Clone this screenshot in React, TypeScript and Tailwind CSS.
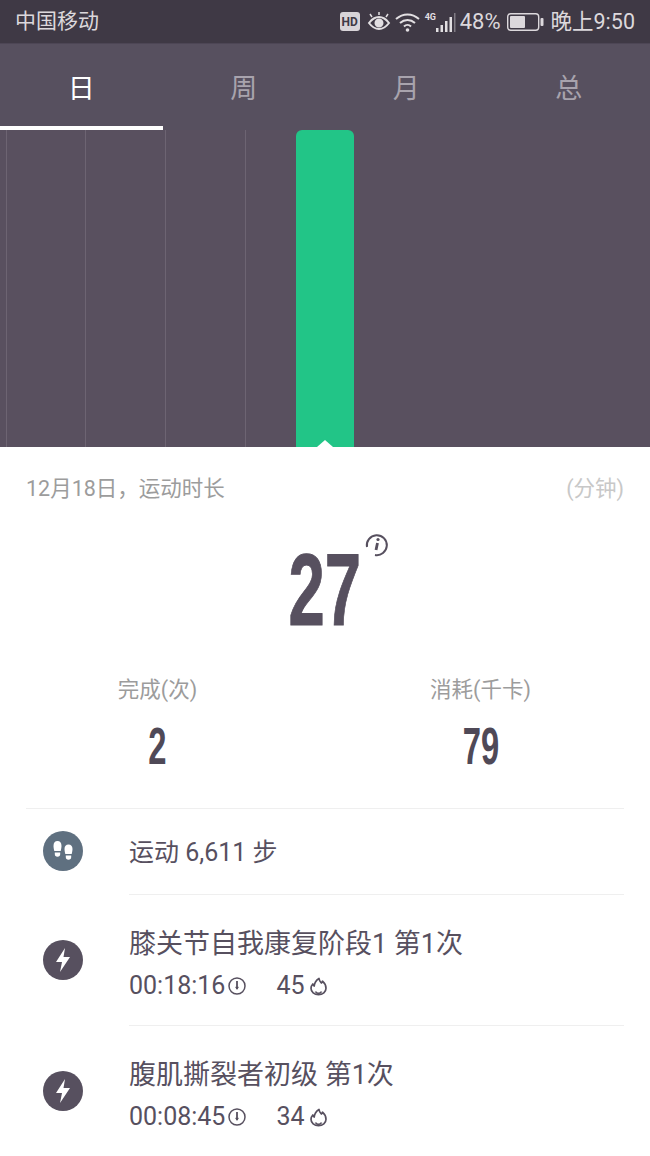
import React from 'react';

const FONT = { fontFamily: 'Roboto, "Noto Sans CJK SC", sans-serif' };
const NUM_FONT = { fontFamily: '"Liberation Sans", sans-serif' };

const TABS = ['日', '周', '月', '总'];
const GAPS = ['w-[6px]', 'w-[78px]', 'w-[79px]', 'w-[79px]'];

function StatusIcons() {
  return (
    <div className="flex items-center">
      <div className="w-[20px] h-[19px] rounded-[3px] bg-[#d8d4d8] text-[#3f3945] text-[12px] font-bold flex items-center justify-center leading-none">HD</div>
      <svg width="24" height="20" viewBox="0 0 24 20" className="ml-[7px]" fill="none" stroke="#e2dfe2" strokeWidth="2">
        <path d="M2 11c3-4 6-6 10-6s7 2 10 6c-3 4-6 6-10 6s-7-2-10-6z" />
        <circle cx="12" cy="11" r="3.500" fill="#e2dfe2" />
        <path d="M3 2l2 3M12 0v3M21 2l-2 3" strokeWidth="1.500" />
      </svg>
      <svg width="25" height="20" viewBox="0 0 25 20" className="ml-[4px]" fill="none" stroke="#e2dfe2" strokeWidth="2">
        <path d="M1 7c7-6 16-6 23 0M5 11c4.500-4 10.500-4 15 0M9 14.500c2-2 5-2 7 0" />
        <circle cx="12.500" cy="18" r="1.800" fill="#e2dfe2" stroke="none" />
      </svg>
      <div className="relative ml-[5px] w-[31px] h-[20px]">
        <svg width="31" height="20" viewBox="0 0 31 20" fill="#e2dfe2">
          <rect x="11" y="16" width="2.500" height="4" />
          <rect x="15.500" y="13" width="2.500" height="7" />
          <rect x="20" y="9" width="2.500" height="11" />
          <rect x="24.500" y="5" width="2.500" height="15" />
          <rect x="29" y="1" width="1.500" height="19" opacity="0.4" />
        </svg>
        <span className="absolute left-0 top-[1px] text-[9px] font-bold text-[#e2dfe2] leading-none">4G</span>
      </div>
      <span className="ml-[4px] text-[22px] leading-none text-[#dcd8dc]">48%</span>
      <svg width="37" height="18" viewBox="0 0 37 18" className="ml-[6px]" fill="none">
        <rect x="0.700" y="0.700" width="31" height="16.600" rx="3" stroke="#dcd8dc" strokeWidth="1.400" />
        <rect x="3" y="3" width="15" height="12" rx="1" fill="#dcd8dc" />
        <rect x="33.500" y="5" width="3" height="8" rx="1" fill="#dcd8dc" />
      </svg>
      <span className="ml-[7px] text-[21.500px] leading-none text-[#dcd8dc]">晚上9:50</span>
    </div>
  );
}

function Bolt() {
  return (
    <div className="w-[40px] h-[40px] rounded-full bg-[#57505f] flex items-center justify-center shrink-0">
      <svg width="18" height="26" viewBox="0 0 18 26" fill="#fff">
        <path d="M11 1L2 15h6l-2 10 10-15h-6.500z" />
      </svg>
    </div>
  );
}

function Steps() {
  return (
    <div className="w-[40px] h-[40px] rounded-full bg-[#5f7080] flex items-center justify-center shrink-0">
      <svg width="24" height="24" viewBox="0 0 24 24" fill="#fff">
        <path d="M2.500 7C2.500 3.800 4 2 6.500 2s4 1.800 4 5c0 1.800-.5 3.700-.8 5H3.300c-.3-1.300-.8-3.200-.8-5z" />
        <path d="M3.800 13.500h5.400V15a2.700 2.700 0 0 1-5.400 0z" />
        <path d="M13.500 10c0-3 1.500-4.500 4-4.500s4 1.500 4 4.500c0 1.800-.5 3.700-.8 5h-6.400c-.3-1.300-.8-3.200-.8-5z" />
        <path d="M14.800 16.500h5.400V18a2.700 2.700 0 0 1-5.400 0z" />
      </svg>
    </div>
  );
}

function Clock() {
  return (
    <svg width="18" height="18" viewBox="0 0 18 18" fill="none" stroke="#57505f" strokeWidth="1.500" className="ml-[3px]">
      <circle cx="9" cy="9" r="8" />
      <path d="M9 4v8" strokeWidth="1.800" />
      <path d="M7.500 10L9 12.500 10.500 10z" fill="#57505f" strokeWidth="0.500" />
    </svg>
  );
}

function Flame() {
  return (
    <svg width="19" height="19" viewBox="0 0 19 19" fill="none" stroke="#57505f" strokeWidth="1.700" strokeLinejoin="round" className="ml-[4px]">
      <path d="M10 1.500c.3 2.500 1.500 3.500 2.500 4.500.5-.5.8-1 1-1.800 2 1.800 3.500 4 3.500 7 0 3.800-3.300 6.500-7.500 6.500S2 15 2 11.200c0-1.700.7-3 1.800-4.200.3 1 .7 1.600 1.400 2C5.500 6 7.500 3 10 1.500z" />
      <path d="M6.500 14.500c.5 1.200 1.700 1.800 3 1.800s2.500-.6 3-1.800" />
    </svg>
  );
}

function Workout({ title, time, kcal, border }: { title: string; time: string; kcal: string; border?: boolean }) {
  return (
    <div className="flex items-start">
      <div className="w-[129px] shrink-0 pl-[43px] pt-[45px]"><Bolt /></div>
      <div className={`flex-1 h-[131px] pt-[31px] ${border ? 'border-b border-[#efefef]' : ''}`}>
        <div className="text-[27px] leading-[36px] text-[#57505f]">{title}</div>
        <div className="flex items-center mt-[6px] text-[25px] leading-[36px] text-[#57505f]">
          <span>{time}</span>
          <Clock />
          <span className="ml-[30px]">{kcal}</span>
          <Flame />
        </div>
      </div>
    </div>
  );
}

export default function App() {
  return (
    <div className="w-[650px] h-[1156px] overflow-hidden bg-white flex flex-col" style={FONT}>
      {/* status bar */}
      <div className="h-[43px] shrink-0 bg-[#3f3945] flex items-center justify-between px-[15px]">
        <span className="text-[21px] leading-none text-[#dcd8dc]">中国移动</span>
        <StatusIcons />
      </div>

      <div className="h-[87px] shrink-0 bg-[#57505f] border-t border-[#4d4655] grid grid-cols-4">
        {TABS.map((t, i) => (
          <div key={t} className={`flex items-center justify-center pt-[8px] text-[27px] border-b-[4px] ${i === 0 ? 'text-white border-white' : 'text-[#a8a3ad] border-transparent'}`}>
            {t}
          </div>
        ))}
      </div>

      {/* chart */}
      <div className="h-[317px] shrink-0 bg-[#59505f] flex">
        {GAPS.map((w, i) => (
          <div key={i} className={`${w} border-r border-[#6d6472] box-content`} />
        ))}
        <div className="w-[50px]" />
        <div className="w-[58px] bg-[#22c587] rounded-t-[6px] relative">
          <div className="absolute bottom-0 left-[21px] w-0 h-0 border-l-[8px] border-r-[8px] border-b-[7px] border-l-transparent border-r-transparent border-b-white" />
        </div>
      </div>

      <div className="flex justify-between px-[26px] pt-[28px] text-[21.500px] leading-[28px] shrink-0">
        <span className="text-[#9c9c9c]">12月18日，运动时长</span>
        <span className="text-[#c8c8c8]">(分钟)</span>
      </div>

      <div className="h-[120px] shrink-0 flex justify-center relative">
        <div className="text-[#57505f] text-[102px] leading-none font-bold scale-x-[0.64] mt-[36px] [-webkit-text-stroke:1px_#57505f]" style={NUM_FONT}>27</div>
        <svg width="24" height="24" viewBox="0 0 24 24" fill="none" className="absolute left-[365px] top-[30px]" stroke="#57505f" strokeWidth="2">
          <path d="M2 14A10 10 0 1 1 10 22" />
          <circle cx="13" cy="6.500" r="1.600" fill="#57505f" stroke="none" />
          <path d="M12.500 10l-1.500 7" strokeWidth="2.800" />
        </svg>
      </div>

      <div className="grid grid-cols-2 shrink-0 px-[26px] mt-[53px]">
        <div className="flex flex-col items-center pr-[36px]">
          <span className="text-[21.500px] leading-[28px] text-[#9c9c9c]">完成(次)</span>
          <span className="text-[#4f4957] text-[52px] leading-none font-bold scale-x-[0.63] mt-[16px]" style={NUM_FONT}>2</span>
        </div>
        <div className="flex flex-col items-center pl-[12px]">
          <span className="text-[21.500px] leading-[28px] text-[#9c9c9c]">消耗(千卡)</span>
          <span className="text-[#4f4957] text-[52px] leading-none font-bold scale-x-[0.63] mt-[16px]" style={NUM_FONT}>79</span>
        </div>
      </div>

      <div className="mx-[26px] shrink-0 border-b border-[#efefef] mt-[36px]" />

      <div className="flex items-center h-[86px] shrink-0">
        <div className="w-[129px] shrink-0 pl-[43px] pb-[2px]"><Steps /></div>
        <div className="flex-1 mr-[26px] h-full flex items-center pt-[2px] border-b border-[#efefef] text-[25px] text-[#57505f]">运动 6,611 步</div>
      </div>

      <div className="pr-[26px] shrink-0">
        <Workout title="膝关节自我康复阶段1 第1次" time="00:18:16" kcal="45" border />
        <Workout title="腹肌撕裂者初级 第1次" time="00:08:45" kcal="34" />
      </div>
    </div>
  );
}
